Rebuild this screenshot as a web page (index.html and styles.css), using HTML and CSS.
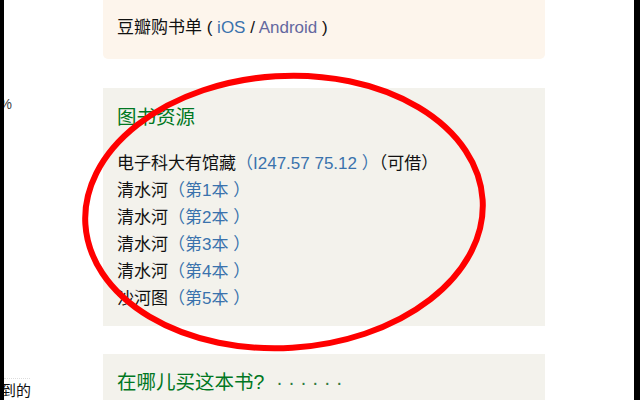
FILE: index.html
```html
<!DOCTYPE html>
<html lang="zh-CN">
<head>
  <meta charset="UTF-8">
  <title>图书资源</title>
  <link rel="stylesheet" href="styles.css">
</head>
<body>

  <div class="frame">
    <div class="side">
      <div class="clip clip-pct"><span>7.5%</span></div>
      <div class="side-rule"></div>
      <div class="clip clip-word"><span>得到的</span></div>
    </div>

    <div class="main">
      <div class="box box-app">
        豆瓣购书单 ( <a href="#" class="link">iOS</a> / <a href="#" class="link visited">Android</a> )
      </div>

      <div class="box box-res">
        <h2>图书资源</h2>
        <ul class="holdings">
          <li>电子科大有馆藏<a href="#" class="link">（I247.57 75.12 ）</a>（可借）</li>
          <li>清水河<a href="#" class="link">（第1本 ）</a></li>
          <li>清水河<a href="#" class="link">（第2本 ）</a></li>
          <li>清水河<a href="#" class="link">（第3本 ）</a></li>
          <li>清水河<a href="#" class="link">（第4本 ）</a></li>
          <li>沙河图<a href="#" class="link">（第5本 ）</a></li>
        </ul>
      </div>

      <div class="box box-res box-buy">
        <h2>在哪儿买这本书?<span class="dots">· · · · · ·</span></h2>
      </div>
    </div>
  </div>

  <svg class="mark" viewBox="0 0 640 400" width="640" height="400">
    <rect x="0" y="0" width="4" height="400" fill="#000"/>
    <rect x="634" y="0" width="6" height="400" fill="#000"/>
    <ellipse cx="284" cy="212" rx="199" ry="136" transform="rotate(-3.5 284 212)"
             fill="none" stroke="#f00" stroke-width="6"/>
  </svg>

</body>
</html>
```

FILE: styles.css
```css
body {
  margin: 0;
  padding: 0;
  background-color: #fff;
  font-family: "Liberation Sans", "Noto Sans CJK SC", sans-serif;
  font-size: 17px;
  color: #111;
  overflow: hidden;
}

.frame {
  display: flex;
  box-sizing: border-box;
  width: 640px;
  height: 400px;
  overflow: hidden;
  padding-left: 4px;
}

.side {
  flex: 0 0 99px;
  display: flex;
  flex-direction: column;
}

.clip {
  display: flex;
  justify-content: flex-end;
  overflow: hidden;
  white-space: nowrap;
  color: #444;
}

.clip-pct {
  width: 8px;
  margin-top: 94px;
  font-size: 14px;
  line-height: 20px;
}

.side-rule {
  width: 26px;
  margin-top: 265px;
  border-top: 1px dotted #ddd;
}

.clip-word {
  width: 27px;
  margin-top: 2px;
  font-size: 15px;
  line-height: 20px;
  color: #111;
}

.main {
  flex: 0 0 442px;
}

.box {
  padding: 0 14px;
}

.box-app {
  background-color: #fdf5ec;
  border-radius: 0 0 5px 5px;
  padding-top: 16px;
  padding-bottom: 19px;
  line-height: 24px;
}

.box-res {
  background-color: #f3f2ec;
  margin-top: 29px;
  padding-top: 16px;
  padding-bottom: 14px;
}

.box-buy {
  margin-top: 28px;
  padding-top: 15px;
  padding-bottom: 20px;
}

h2 {
  margin: 0;
  font-size: 19.5px;
  font-weight: normal;
  line-height: 26px;
  color: #072;
}

.dots {
  margin-left: 12px;
  color: #2f7a3f;
}

.holdings {
  list-style: none;
  margin: 20px 0 0 0;
  padding: 0;
}

.holdings li {
  line-height: 27px;
}

.link {
  color: #3a72ad;
  text-decoration: none;
}

.link.visited {
  color: #6468a0;
}

/* the red pen mark and window edges sit over the page */
.mark {
  position: absolute;
  top: 0;
  left: 0;
  pointer-events: none;
}
```
